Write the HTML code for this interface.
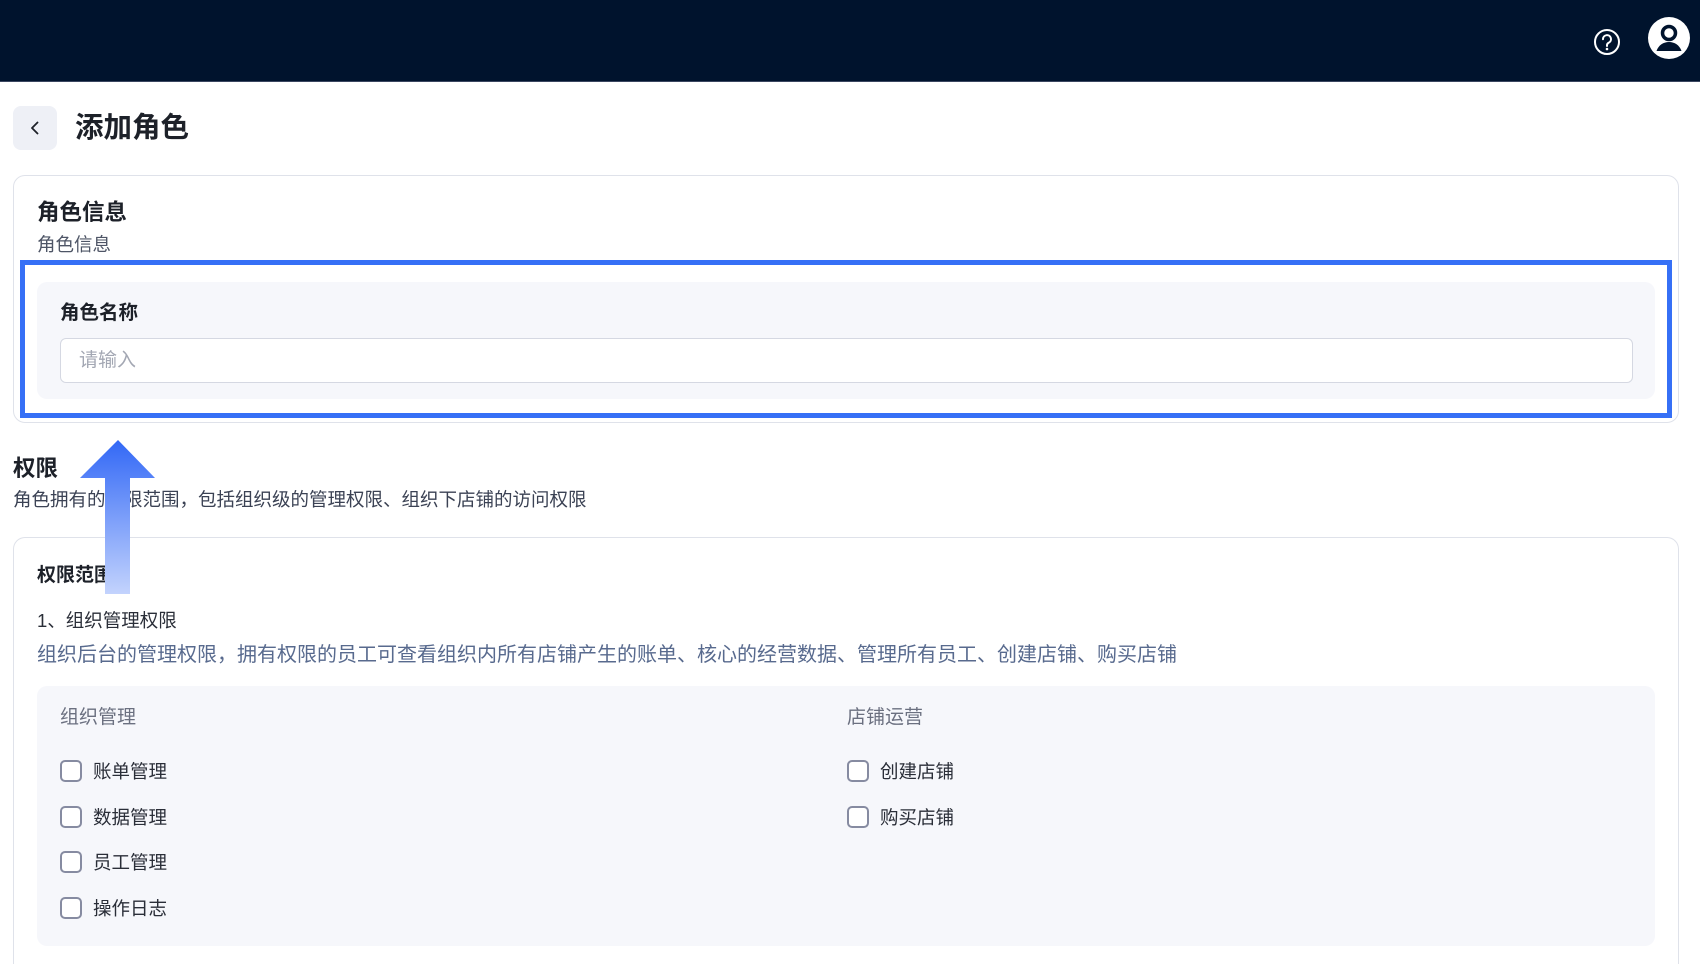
<!DOCTYPE html>
<html><head><meta charset="utf-8"><style>
*{margin:0;padding:0;box-sizing:border-box}
html,body{width:1700px;height:964px;overflow:hidden}
body{background:#fff;font-family:"Liberation Sans","Noto Sans CJK SC",sans-serif;color:#1d2129;position:relative}
.a{position:absolute;white-space:nowrap}
.cb{position:absolute;width:22px;height:22px;border:2.5px solid #868ba1;border-radius:5px;background:#fff}
.ct{position:absolute;font-size:18.5px;color:#2a2e38;line-height:22px}
</style></head><body>
<div class="a" style="left:0;top:0;width:1700px;height:82px;background:#00132d;border-bottom:1px solid #3a4660"></div>
<svg class="a" style="left:1592px;top:27px" width="30" height="30" viewBox="0 0 30 30"><circle cx="15" cy="15" r="12" fill="none" stroke="#fff" stroke-width="2"/><path d="M11 12.2a4 4 0 1 1 5.6 3.6c-1 .5-1.6 1.2-1.6 2.4v.8" fill="none" stroke="#fff" stroke-width="2" stroke-linecap="round"/><circle cx="15" cy="22" r="1.3" fill="#fff"/></svg>
<svg class="a" style="left:1648px;top:17px" width="42" height="42" viewBox="0 0 42 42"><circle cx="21" cy="21" r="21" fill="#fff"/><circle cx="21" cy="16" r="6.5" fill="none" stroke="#00132d" stroke-width="3.5"/><path d="M8.5 34c2-6 7-9 12.5-9s10.5 3 12.5 9z" fill="#00132d"/></svg>
<div class="a" style="left:13px;top:106px;width:44px;height:44px;border-radius:8px;background:#eef0f6"></div>
<svg class="a" style="left:26px;top:119px" width="18" height="18" viewBox="0 0 18 18"><path d="M11.5 3.5L6 9l5.5 5.5" fill="none" stroke="#1d2129" stroke-width="1.8" stroke-linecap="round" stroke-linejoin="round"/></svg>
<div class="a" style="left:75px;top:111px;font-size:28.5px;font-weight:bold;line-height:34px">添加角色</div>

<div class="a" style="left:13px;top:175px;width:1666px;height:248px;border:1.5px solid #dfe2ea;border-radius:12px"></div>
<div class="a" style="left:37px;top:200px;font-size:22.5px;font-weight:bold;line-height:26px">角色信息</div>
<div class="a" style="left:37px;top:234px;font-size:18.5px;color:#4e5566;line-height:22px">角色信息</div>
<div class="a" style="left:37px;top:282px;width:1618px;height:117px;background:#f6f7fb;border-radius:10px"></div>
<div class="a" style="left:60px;top:301px;font-size:19.5px;font-weight:bold;line-height:24px">角色名称</div>
<div class="a" style="left:60px;top:338px;width:1573px;height:45px;background:#fff;border:1.5px solid #d5d8e2;border-radius:6px"></div>
<div class="a" style="left:79px;top:349px;font-size:19px;color:#a3a7b3;line-height:24px">请输入</div>
<div class="a" style="left:20px;top:260px;width:1652px;height:158px;border:5px solid #3670f6"></div>

<div class="a" style="left:13px;top:455px;font-size:22.5px;font-weight:bold;line-height:28px">权限</div>
<div class="a" style="left:13px;top:489px;font-size:18.5px;color:#3b4254;line-height:22px">角色拥有的权限范围，包括组织级的管理权限、组织下店铺的访问权限</div>

<div class="a" style="left:13px;top:537px;width:1666px;height:428px;border:1.5px solid #dfe2ea;border-bottom:none;border-radius:12px 12px 0 0"></div>
<div class="a" style="left:37px;top:564px;font-size:19px;font-weight:bold;line-height:24px">权限范围</div>
<div class="a" style="left:37px;top:610px;font-size:18.5px;color:#2a2e38;line-height:22px">1、组织管理权限</div>
<div class="a" style="left:37px;top:643px;font-size:20px;color:#586a8e;line-height:24px">组织后台的管理权限，拥有权限的员工可查看组织内所有店铺产生的账单、核心的经营数据、管理所有员工、创建店铺、购买店铺</div>
<div class="a" style="left:37px;top:686px;width:1618px;height:260px;background:#f6f7fb;border-radius:10px"></div>
<div class="a" style="left:60px;top:706px;font-size:19px;color:#6b7080;line-height:24px">组织管理</div>
<div class="a" style="left:847px;top:706px;font-size:19px;color:#6b7080;line-height:24px">店铺运营</div>

<div class="cb" style="left:60px;top:760px"></div><div class="ct" style="left:93px;top:761px">账单管理</div>
<div class="cb" style="left:60px;top:806px"></div><div class="ct" style="left:93px;top:807px">数据管理</div>
<div class="cb" style="left:60px;top:851px"></div><div class="ct" style="left:93px;top:852px">员工管理</div>
<div class="cb" style="left:60px;top:897px"></div><div class="ct" style="left:93px;top:898px">操作日志</div>
<div class="cb" style="left:847px;top:760px"></div><div class="ct" style="left:880px;top:761px">创建店铺</div>
<div class="cb" style="left:847px;top:806px"></div><div class="ct" style="left:880px;top:807px">购买店铺</div>

<svg class="a" style="left:0;top:0" width="1700" height="964"><defs><linearGradient id="g" x1="0" y1="0" x2="0" y2="1"><stop offset="0" stop-color="#3268f6"/><stop offset="1" stop-color="#c3d3fd"/></linearGradient></defs><path d="M118 440L155 478H130V594H105V478H80Z" fill="url(#g)"/></svg>
</body></html>
